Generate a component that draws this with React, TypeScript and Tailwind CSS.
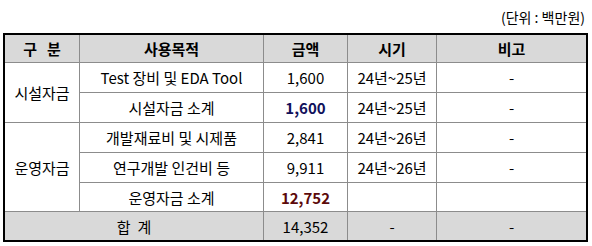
const cell = "bg-white flex items-center justify-center";
const head = "bg-[#d9d9d9] flex items-center justify-center font-bold";

export default function App() {
  return (
    <div
      className="w-[592px] h-[246px] bg-white text-[15px] text-black leading-none"
      style={{ fontFamily: '"Noto Sans CJK KR", "Noto Sans", sans-serif' }}
    >
      <div className="h-[33px] flex items-center justify-end pr-[7px] pt-[1px] text-[14px]">(단위 : 백만원)</div>
      <div className="ml-[3px] w-[585px] border-2 border-black bg-[#8c8c8c] grid grid-cols-[74px_183px_83px_88px_149px] grid-rows-[27px_29px_29px_29px_29px_28px_28px] gap-px">
        <div className={head}>
          <span className="tracking-[10px] mr-[-10px]">구분</span>
        </div>
        <div className={head}>사용목적</div>
        <div className={head}>금액</div>
        <div className={head}>시기</div>
        <div className={head}>비고</div>

        <div className={`${cell} row-span-2`}>시설자금</div>
        <div className={cell}>Test 장비 및 EDA Tool</div>
        <div className={cell}>1,600</div>
        <div className={cell}>24년~25년</div>
        <div className={cell}>-</div>

        <div className={cell}>시설자금 소계</div>
        <div className={`${cell} font-bold text-[#10105a]`}>1,600</div>
        <div className={cell}>24년~25년</div>
        <div className={cell}>-</div>

        <div className={`${cell} row-span-3`}>운영자금</div>
        <div className={cell}>개발재료비 및 시제품</div>
        <div className={cell}>2,841</div>
        <div className={cell}>24년~26년</div>
        <div className={cell}>-</div>

        <div className={cell}>연구개발 인건비 등</div>
        <div className={cell}>9,911</div>
        <div className={cell}>24년~26년</div>
        <div className={cell}>-</div>

        <div className={cell}>운영자금 소계</div>
        <div className={`${cell} font-bold text-[#5c0a0a]`}>12,752</div>
        <div className={cell}></div>
        <div className={cell}></div>

        <div className="bg-[#d9d9d9] col-span-2 flex items-center justify-center">
          <span className="tracking-[7px] mr-[-7px]">합계</span>
        </div>
        <div className="bg-[#d9d9d9] flex items-center justify-center">14,352</div>
        <div className="bg-[#d9d9d9] flex items-center justify-center">-</div>
        <div className="bg-[#d9d9d9] flex items-center justify-center">-</div>
      </div>
    </div>
  );
}
